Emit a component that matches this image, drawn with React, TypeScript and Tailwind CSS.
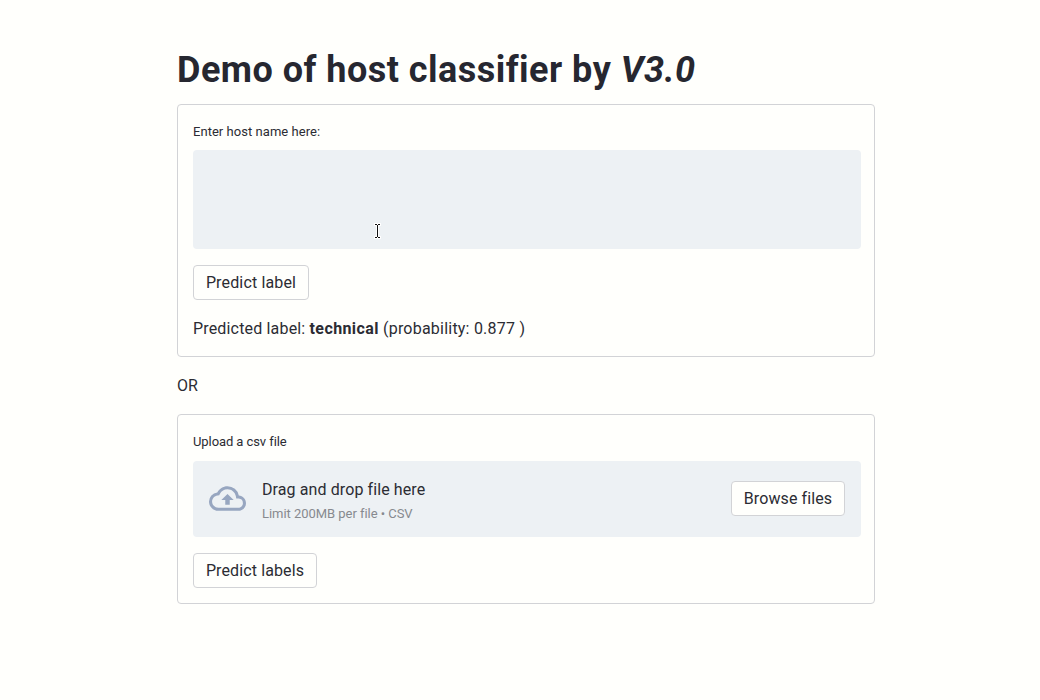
import React from 'react';

function Button({ className, children }: { className: string; children: React.ReactNode }) {
  return (
    <button
      type="button"
      className={`flex h-[35px] shrink-0 items-center justify-center whitespace-nowrap rounded-[4px] border border-[#d2d3d6] bg-[#fffffc] text-base ${className}`}
    >
      {children}
    </button>
  );
}

function Panel({ className, children }: { className: string; children: React.ReactNode }) {
  return (
    <section className={`flex w-[698px] flex-col items-start rounded-[4px] border border-[#d2d3d6] px-[15px] ${className}`}>
      {children}
    </section>
  );
}

function UploadIcon() {
  return (
    <svg className="h-[37px] w-[37px] shrink-0" viewBox="0 0 24 24" fill="#97a6c0">
      <path d="M19.35 10.04A7.49 7.49 0 0012 4C9.11 4 6.6 5.64 5.35 8.04A5.994 5.994 0 000 14c0 3.31 2.69 6 6 6h13c2.76 0 5-2.24 5-5 0-2.64-2.05-4.78-4.65-4.96zM19 18H6c-2.21 0-4-1.79-4-4 0-2.05 1.53-3.76 3.56-3.97l1.07-.11.5-.95A5.469 5.469 0 0112 6c2.62 0 4.88 1.86 5.39 4.43l.3 1.5 1.53.11A2.98 2.98 0 0122 15c0 1.65-1.35 3-3 3zM8 13h2.55v3h2.9v-3H16l-4-4-4 4z" />
    </svg>
  );
}

function TextCursor() {
  return (
    <svg className="absolute left-[180px] top-[72px] h-[18px] w-[9px]" viewBox="0 0 9 18" fill="none">
      <path d="M1 2.5h7M4.5 2v14M1 15.5h7" stroke="#fff" strokeWidth="3" />
      <path d="M2 2.5h2M5 2.5h2M4.5 3v12M2 15.5h2M5 15.5h2" stroke="#111" strokeWidth="1" />
    </svg>
  );
}

export default function App() {
  return (
    <main className="min-h-screen bg-[#fffffc] pl-[177px] pt-[47px] font-['Roboto',sans-serif] text-[#2b2c33]">
      <h1 className="h-[57px] whitespace-nowrap text-[36px] font-bold leading-[46px] tracking-[0.48px] text-[#262730]">
        Demo of host classifier by <em>V3.0</em>
      </h1>

      <Panel className="h-[253px]">
        <label className="mt-[17px] h-[28px] text-[13px] leading-[20px] tracking-[0.04px]">Enter host name here:</label>
        <div className="relative h-[99px] w-[668px] rounded-[4px] bg-[#edf1f4]">
          <TextCursor />
        </div>
        <Button className="mt-[16px] w-[116px] tracking-[0.15px]">Predict label</Button>
        <p className="mt-[17px] whitespace-nowrap text-base leading-[24px] tracking-[0.17px]">
          Predicted label: <strong className="tracking-[0.4px]">technical</strong>{' '}
          <span className="tracking-[0.22px]">(probability: 0.877 )</span>
        </p>
      </Panel>

      <p className="mt-[17px] h-[40px] text-base leading-[24px]">OR</p>

      <Panel className="h-[190px]">
        <label className="mt-[17px] h-[29px] text-[13px] leading-[20px] tracking-[-0.08px]">Upload a csv file</label>
        <div className="flex h-[76px] w-[668px] items-center rounded-[4px] bg-[#edf1f4] px-[16px] pb-[1px]">
          <UploadIcon />
          <div className="ml-[16px] mt-[6px] flex grow flex-col items-start">
            <span className="text-base leading-[24px] tracking-[0.1px]">Drag and drop file here</span>
            <span className="text-[13px] leading-[24px] tracking-[-0.04px] text-[#878a8f]">Limit 200MB per file • CSV</span>
          </div>
          <Button className="w-[114px] tracking-[0.1px]">Browse files</Button>
        </div>
        <Button className="mt-[16px] w-[124px] tracking-[0.12px]">Predict labels</Button>
      </Panel>
    </main>
  );
}
